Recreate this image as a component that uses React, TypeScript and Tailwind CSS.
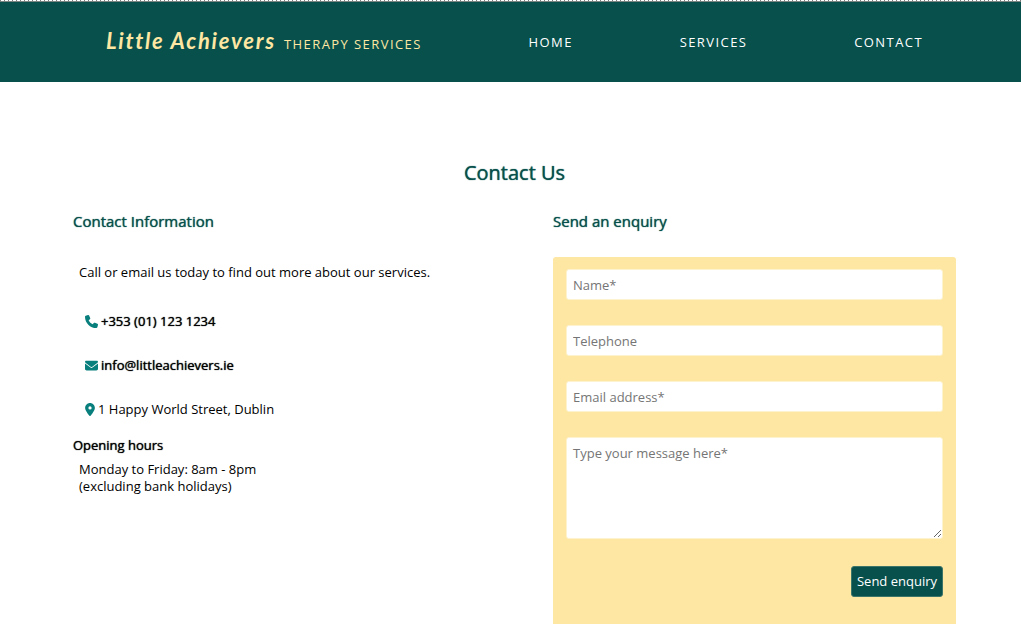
import { FaEnvelope, FaLocationDot, FaPhone } from "react-icons/fa6";

const links = ["Home", "Services", "Contact"];

const fieldClass =
  "block w-full rounded-[3px] border border-[#fef3cf] bg-white px-1.5 text-[13px] leading-[17px] text-black placeholder:text-[#757575] placeholder:opacity-100";

const strongText = "[text-shadow:0_0_1px_currentColor]";

function Header() {
  return (
    <header>
      <div className="h-px bg-[repeating-linear-gradient(90deg,#7c7c7c_0_1px,#ffffff_1px_4px)]" />
      <div className="h-px bg-[#7d8583]" />
      <nav className="flex h-20 items-center justify-between bg-[#07504c] pt-0.5 pr-[98px] pl-[106px] text-[13px] tracking-[0.11em] text-white uppercase">
        <a href="#home" className="flex items-baseline gap-2 pb-1 text-[#fde7a3]">
          <span className="font-[Lato] text-[22px] leading-8 font-bold tracking-[0.08em] normal-case italic">
            Little Achievers
          </span>
          <span>Therapy Services</span>
        </a>
        {links.map((link) => (
          <a key={link} href={"#" + link.toLowerCase()}>
            {link}
          </a>
        ))}
      </nav>
    </header>
  );
}

function ContactInformation() {
  return (
    <section>
      <h2 className={"text-[15px] leading-5 text-[#07504c] " + strongText}>Contact Information</h2>
      <p className="mt-8 ml-1.5 leading-[18px]">
        Call or email us today to find out more about our services.
      </p>
      <address className="mt-[31px] ml-3 flex flex-col gap-[26px] leading-[18px] not-italic">
        <a href="tel:+353011231234" className={"flex items-center gap-[3px] " + strongText}>
          <FaPhone className="size-[13px] text-[#087f7c]" />
          +353 (01) 123 1234
        </a>
        <a href="mailto:info@littleachievers.ie" className={"flex items-center gap-[3px] " + strongText}>
          <FaEnvelope className="size-[13px] text-[#087f7c]" />
          info@littleachievers.ie
        </a>
        <span className="flex items-center gap-[3px]">
          <FaLocationDot className="h-[13px] w-2.5 text-[#087f7c]" />
          1 Happy World Street, Dublin
        </span>
      </address>
      <h3 className={"mt-[18px] leading-[18px] " + strongText}>Opening hours</h3>
      <p className="mt-[7px] ml-1.5 leading-[17px]">
        Monday to Friday: 8am - 8pm
        <br />
        (excluding bank holidays)
      </p>
    </section>
  );
}

function EnquiryForm() {
  return (
    <section>
      <h2 className={"text-[15px] leading-5 text-[#07504c] " + strongText}>Send an enquiry</h2>
      <form className="mt-[26px] flex flex-col gap-[25px] rounded-[3px] bg-[#fde7a3] px-[13px] pt-3 pb-12">
        <input aria-label="Name" name="name" placeholder="Name*" required className={fieldClass + " h-[31px]"} />
        <input aria-label="Telephone" name="telephone" type="tel" placeholder="Telephone" className={fieldClass + " h-[31px]"} />
        <input aria-label="Email address" name="email" type="email" placeholder="Email address*" required className={fieldClass + " h-[31px]"} />
        <textarea
          aria-label="Message"
          name="message"
          placeholder="Type your message here*"
          required
          className={fieldClass + " h-[102px] py-[7px]"}
        />
        <button
          type="submit"
          className="mt-0.5 h-[31px] self-end rounded-[3px] border border-[#3d7469] bg-[#07504c] px-[5px] text-[13px] text-white"
        >
          Send enquiry
        </button>
      </form>
    </section>
  );
}

export default function App() {
  return (
    <div className="h-screen overflow-hidden bg-white font-['Open_Sans',sans-serif] text-[13px] text-black">
      <Header />
      <main className="pt-[77px] pr-[65px] pl-[73px]">
        <h1 className={"text-center text-xl leading-7 text-[#07504c] " + strongText}>Contact Us</h1>
        <div className="mt-6 grid grid-cols-2 gap-x-[77px]">
          <ContactInformation />
          <EnquiryForm />
        </div>
      </main>
    </div>
  );
}
